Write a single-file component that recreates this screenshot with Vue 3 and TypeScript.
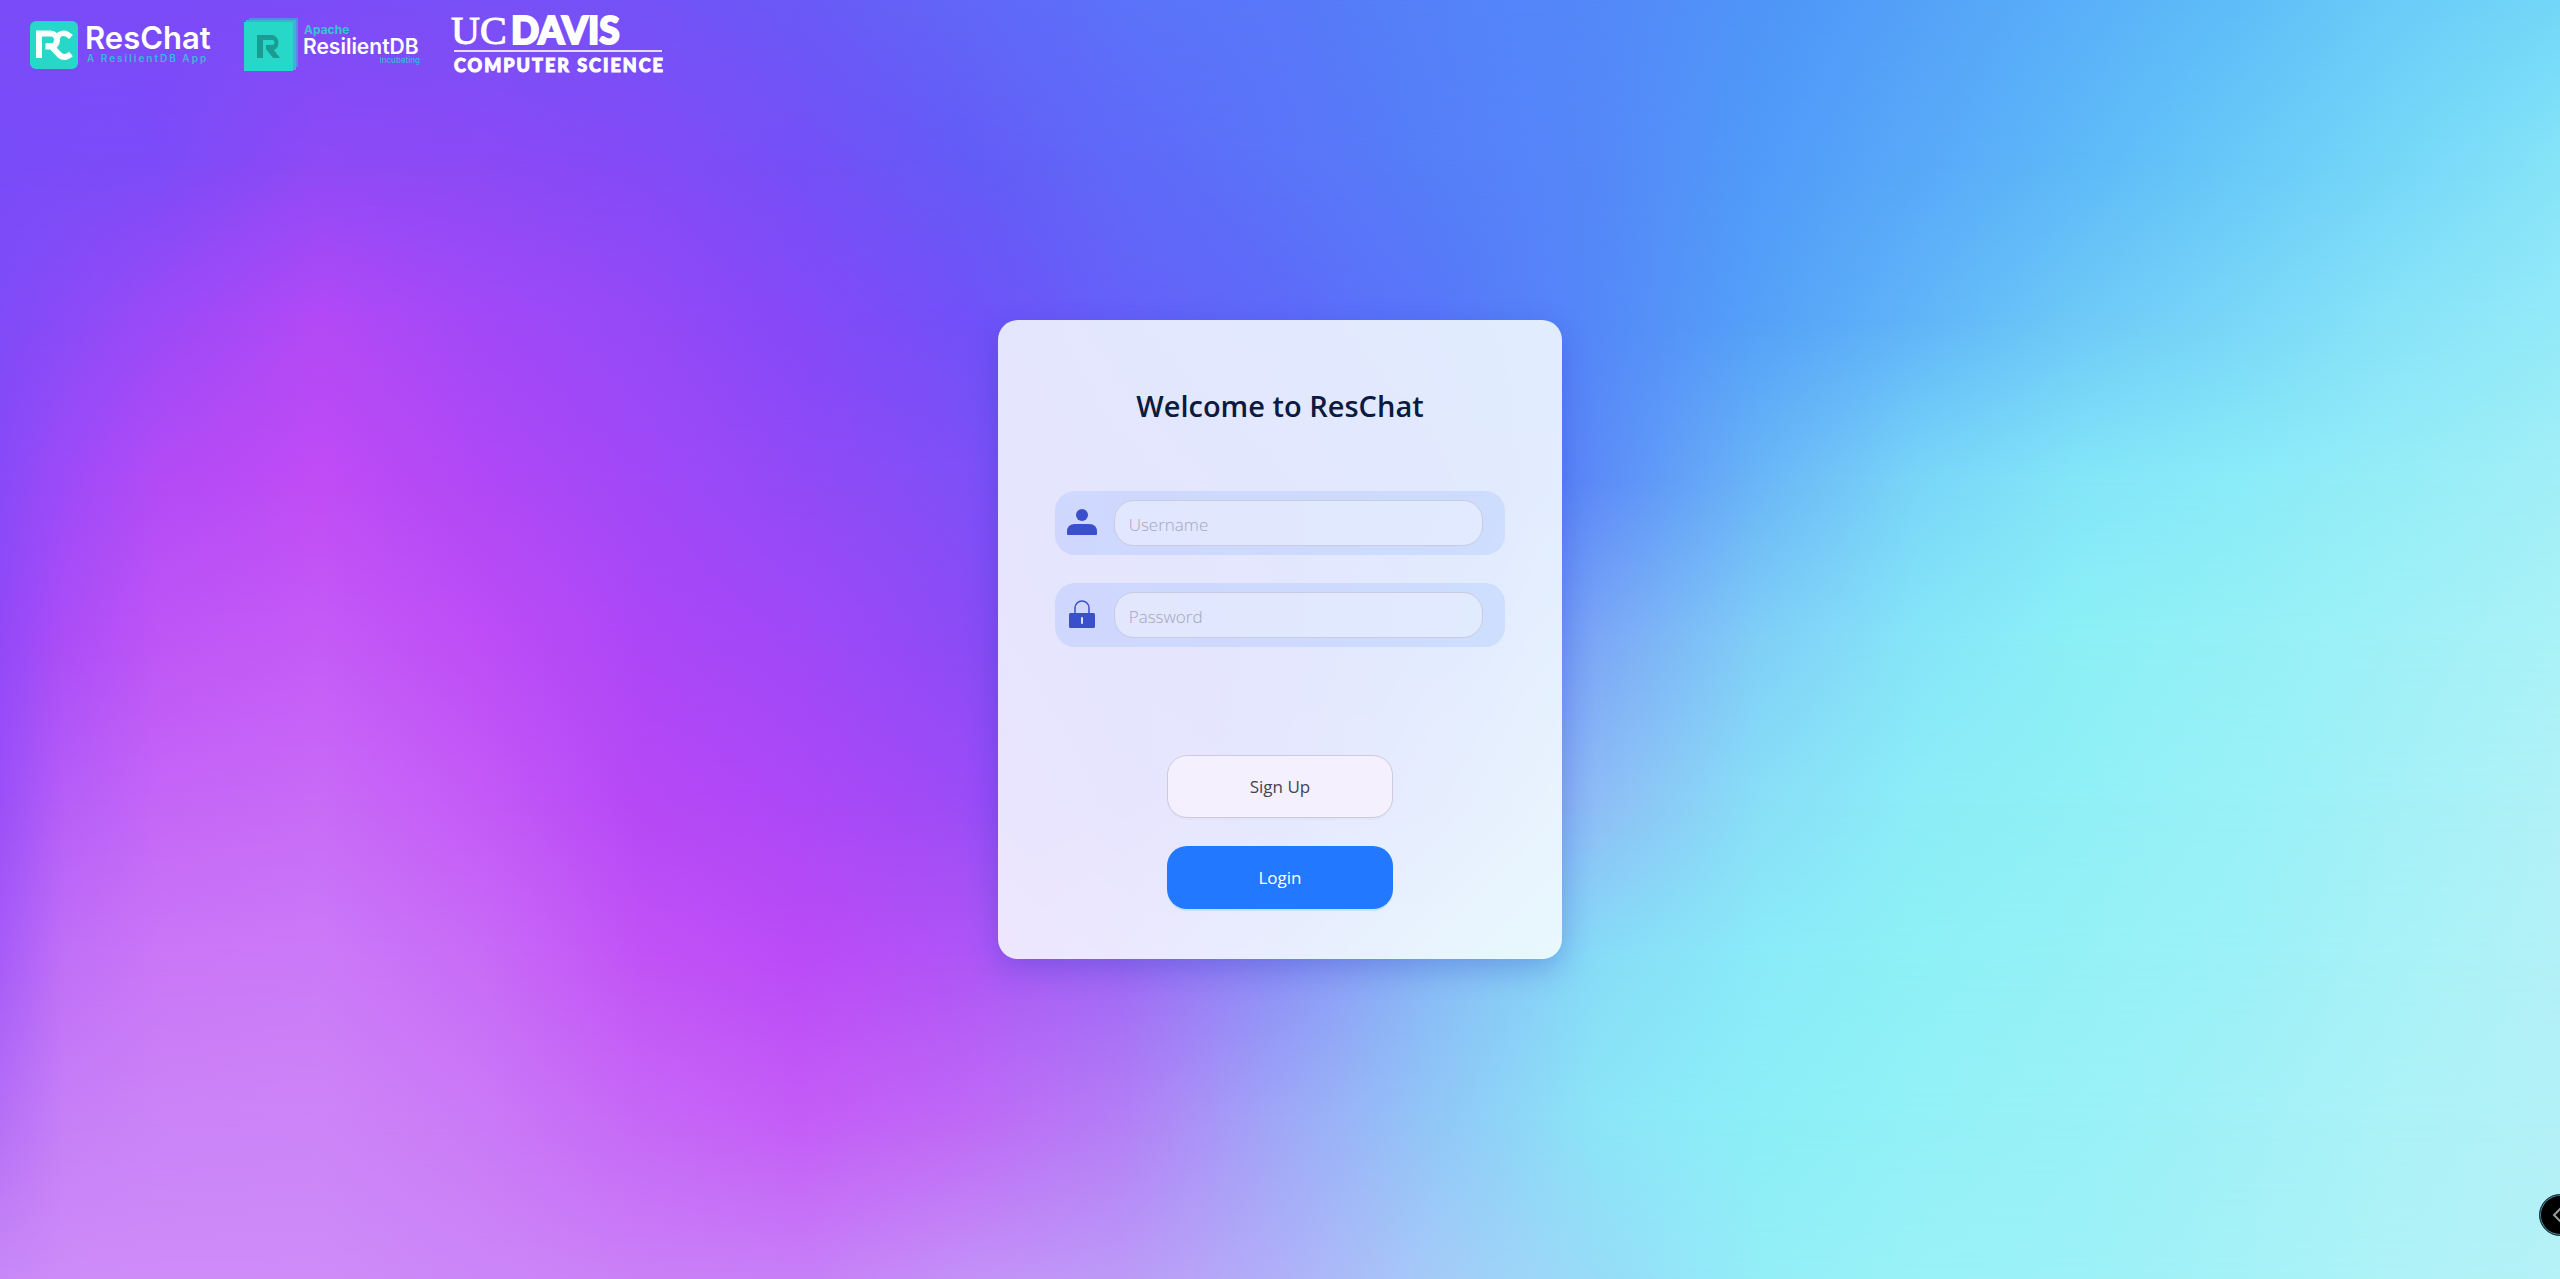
<script setup lang="ts">
import { ref } from 'vue'

interface MeshRow {
  colors: string
}

const username = ref('')
const password = ref('')

// Horizontal stops (in percent) shared by every row of the colour mesh.
const stops: number[] = [
  0, 2.5, 6.25, 12.5, 18.75, 25, 31.25, 37.5, 43.75, 50, 56.25, 62.5, 68.75, 75, 81.25, 87.5, 93.75, 100,
]

const mesh: MeshRow[] = [
  { colors: '7a4cf8 7a4cf8 7b4bf8 7b4cf8 7850f7 7452f7 6a5af7 6166f8 5c72f9 5878f9 5482f9 5489f9 4f95f8 54a2f8 5ab0f9 5fbdf8 6acdf8 72d7f8' },
  { colors: '784cf8 7a4cf8 7c4bf8 8e4af6 8b4af6 834bf7 744ff7 645bf7 5f69f8 5a74f8 557ff9 5588f8 509bf9 58a9f9 5eb9f8 69c9f8 76d7f8 86e4f8' },
  { colors: '804bf8 8a4bf8 9b4af7 b349f6 a249f7 9549f7 8549f8 7150f8 6560f9 5e6af8 5877f9 5489f8 54a1f8 60b5f8 6ec9f7 7ad7f8 88e4f8 94eaf8' },
  { colors: '884af8 9d4bf8 b34bf6 c04cf5 b048f6 a149f7 914af7 8050f7 6c57f8 6460f8 5b6cf8 5c8cf8 6ab6f7 79d6f8 84e6f8 8aecf8 96edf7 a2eff7' },
  { colors: '9249f8 ac4df7 be56f6 c55bf7 be4df6 ac47f7 a049f7 8c4bf6 7353f8 6a5cf8 6078f8 7ca8f6 80cff7 86e6f8 8cf0f6 94f0f6 a0f1f7 aaf2f7' },
  { colors: '9a50f8 b65ef8 c566f7 c86bf7 c45af7 b648f6 ac48f7 9c4cf6 8050f7 7660f7 7c90f7 8ebdf6 88dff7 8cedf7 90f0f6 98f1f7 a4f1f7 b0f1f7' },
  { colors: 'a85cf8 c070f7 ca77f7 cb7af8 c86cf7 c253f6 bb4bf7 b055f6 9f68f5 8c90f6 88bcf6 86ddf7 8aebf8 8ef1f6 94f1f6 9cf1f7 a8f2f7 b2f1f7' },
  { colors: 'b470f6 c77ff7 cb83f7 cd84f7 ca7af7 c668f7 c45cf7 bf68f6 b47ef6 9fa8f7 90c8f7 8be6f7 8ceff7 92f1f7 98f1f6 a2f1f7 acf2f7 b2f1f7' },
  { colors: 'c888f6 cc8cf8 ce8cf8 ce8cf8 cc86f7 ca80f7 c77ff7 c490f7 bc9af7 b0b0f8 a4ccf8 96dcf8 92eef7 98f1f7 9cf1f7 a4f2f7 aef2f7 b4f2f7' },
]

// Each row fades in over the previous one, so neighbouring rows blend smoothly.
function rowStyle(row: MeshRow, index: number): Record<string, string> {
  const gradient = row.colors
    .split(' ')
    .map((color, i) => `#${color} ${stops[i]}%`)
    .join(', ')
  const style: Record<string, string> = { background: `linear-gradient(90deg, ${gradient})` }
  if (index > 0) {
    const step = 100 / (mesh.length - 1)
    style.maskImage = `linear-gradient(180deg, transparent ${(index - 1) * step}%, #000 ${index * step}%)`
  }
  return style
}
</script>

<template>
  <div class="page">
    <div class="backdrop" aria-hidden="true">
      <div v-for="(row, i) in mesh" :key="i" class="mesh-row" :style="rowStyle(row, i)"></div>
    </div>

    <header class="brands">
      <svg class="brand" width="182" height="48" viewBox="0 0 182 48" role="img" aria-label="ResChat">
        <rect width="48" height="48" rx="6" fill="#27d8c8" />
        <path d="M9 37V12.500H20.500A6 6 0 0 1 20.500 25.500H15.500" fill="none" stroke="#fff" stroke-width="6" />
        <path d="M17 25H21L30 34.500Q35 38 41 33" fill="none" stroke="#fff" stroke-width="6" />
        <path d="M41 16Q35 10 29.500 13.500Q26.500 16 26.500 21Q26 25 22 26" fill="none" stroke="#fff" stroke-width="5.500" />
        <text x="55" y="28" class="reschat-name">ResChat</text>
        <text x="57" y="41" class="reschat-sub">A ResilientDB App</text>
      </svg>

      <svg class="brand" width="175" height="54" viewBox="0 0 175 54" role="img" aria-label="Apache ResilientDB">
        <rect x="5" width="49" height="49" fill="#4e8fe6" />
        <rect x="2" y="2" width="50" height="50" fill="#3fb0dc" />
        <rect y="4" width="49" height="49" fill="#27d8c8" />
        <path d="M13 17H28A8 8 0 0 1 30 32L36 40H29L22 31V27H28A2.500 2.500 0 0 0 28 22H19V40H13Z" fill="#1a9c92" />
        <text x="60" y="16" class="apache">Apache</text>
        <text x="59" y="36" class="resilient">ResilientDB</text>
        <text x="176" y="45" class="incubating">Incubating</text>
      </svg>

      <svg class="brand" width="211" height="59" viewBox="0 0 211 59" role="img" aria-label="UC Davis Computer Science">
        <text x="0" y="29" class="uc">UC</text>
        <text x="60" y="29" class="davis">DAVIS</text>
        <rect x="3" y="35" width="208" height="2" fill="#fff" opacity="0.8" />
        <text x="3" y="57" class="science">COMPUTER SCIENCE</text>
      </svg>
    </header>

    <main class="card">
      <h1>Welcome to ResChat</h1>
      <form @submit.prevent>
        <div class="field">
          <label for="username" aria-label="Username">
            <svg width="30" height="30" viewBox="0 0 30 30" aria-hidden="true">
              <circle cx="15" cy="7" r="6" fill="#3a4fcb" />
              <path d="M0 26V24Q0 16 8 16H22Q30 16 30 24V26Q30 27 29 27H1Q0 27 0 26Z" fill="#3a4fcb" />
            </svg>
          </label>
          <input id="username" v-model="username" type="text" placeholder="Username" />
        </div>
        <div class="field">
          <label for="password" aria-label="Password">
            <svg width="30" height="30" viewBox="0 0 30 30" aria-hidden="true">
              <path d="M8 14V8A7 7 0 0 1 22 8V14" fill="none" stroke="#3a4fcb" stroke-width="1.500" />
              <rect x="2" y="13" width="26" height="15" rx="1.500" fill="#3a4fcb" />
              <rect x="14" y="17" width="2" height="7" rx="1" fill="#dfe4fd" />
            </svg>
          </label>
          <input id="password" v-model="password" type="password" placeholder="Password" />
        </div>
        <div class="actions">
          <button type="button" class="signup">Sign Up</button>
          <button type="submit" class="login">Login</button>
        </div>
      </form>
    </main>

    <button type="button" class="drawer-toggle" aria-label="Open panel">
      <svg width="40" height="40" viewBox="0 0 40 40" aria-hidden="true">
        <path d="M21 13L14 20L21 27" fill="none" stroke="#9a9a9a" stroke-width="2" />
      </svg>
    </button>
  </div>
</template>

<style>
body {
  margin: 0;
}
</style>

<style scoped>
.page {
  position: relative;
  display: grid;
  grid-template-rows: 1fr auto 1fr;
  justify-items: center;
  min-height: 100vh;
  overflow: hidden;
  font-family: 'Segoe UI', 'Open Sans', 'Noto Sans', sans-serif;
}

.backdrop {
  position: absolute;
  inset: 0;
  background: #7a4cf8;
}

.mesh-row {
  position: absolute;
  inset: 0;
}

.brands {
  position: relative;
  display: flex;
  align-items: center;
  align-self: start;
  justify-self: start;
  gap: 32px;
  padding: 15px 30px;
}

.brand {
  display: block;
  overflow: visible;
}

.reschat-name {
  font: 600 31px Inter, sans-serif;
  fill: #fff;
}

.reschat-sub {
  font: 600 10px Inter, sans-serif;
  letter-spacing: 2px;
  fill: #35b9dd;
}

.apache {
  font: 700 12px Inter, sans-serif;
  fill: #30c8d4;
}

.resilient {
  font: 600 21px Inter, sans-serif;
  fill: #fff;
}

.incubating {
  font: 500 8px Inter, sans-serif;
  text-anchor: end;
  fill: #35b9dd;
}

.uc {
  font: 400 40px 'Liberation Serif', serif;
  fill: #fff;
  stroke: #fff;
}

.davis {
  font: 900 37px Lato, sans-serif;
  fill: #fff;
  stroke: #fff;
  stroke-width: 2px;
}

.science {
  font: 900 18px Lato, sans-serif;
  letter-spacing: 2px;
  fill: #fff;
  stroke: #fff;
}

.card {
  position: relative;
  box-sizing: border-box;
  width: 22%;
  min-width: 360px;
  padding: 66px 0 50px;
  border-radius: 20px;
  background: rgba(248, 254, 255, 0.86);
  box-shadow: 0 10px 30px rgba(30, 50, 190, 0.28);
}

h1 {
  margin: 0 0 65px;
  color: #0b1a40;
  font-size: 29px;
  font-weight: 600;
  line-height: 40px;
  text-align: center;
}

form {
  display: flex;
  flex-direction: column;
  align-items: center;
}

.field {
  display: flex;
  align-items: center;
  box-sizing: border-box;
  width: 80%;
  height: 64px;
  margin-bottom: 28px;
  padding: 0 22px 0 12px;
  border-radius: 20px;
  background: rgba(24, 100, 255, 0.1);
}

.field label,
.field svg {
  display: block;
}

.field input {
  flex: 1;
  box-sizing: border-box;
  min-width: 0;
  height: 46px;
  margin-left: 17px;
  padding: 2px 14px 0;
  border: 1px solid #c9cbe0;
  border-radius: 20px;
  outline: none;
  background: rgba(255, 255, 255, 0.4);
  color: #26263a;
  font: 300 17px 'Segoe UI', 'Open Sans', 'Noto Sans', sans-serif;
}

.field input::placeholder {
  color: #a3a6c0;
  opacity: 1;
}

.actions {
  display: flex;
  flex-direction: column;
  gap: 28px;
  width: 40%;
  margin-top: 80px;
}

.actions button {
  height: 63px;
  border-radius: 20px;
  font: 400 17px 'Segoe UI', 'Open Sans', 'Noto Sans', sans-serif;
}

.actions .signup {
  border: 1px solid #cccadd;
  background: #f4f0fe;
  box-shadow: 0 2px 0 rgba(0, 0, 0, 0.02);
  color: #45434f;
}

.actions .login {
  border: 0;
  background: #2278ff;
  box-shadow: 0 2px 0 rgba(5, 145, 255, 0.12);
  color: #fff;
}

.drawer-toggle {
  position: absolute;
  right: -21px;
  bottom: 43px;
  width: 42px;
  height: 42px;
  padding: 0;
  border: 1px solid #173f4c;
  border-radius: 50%;
  background: #000;
  box-shadow: inset 0 0 0 1px #4c8594;
}

.drawer-toggle svg {
  display: block;
}
</style>
